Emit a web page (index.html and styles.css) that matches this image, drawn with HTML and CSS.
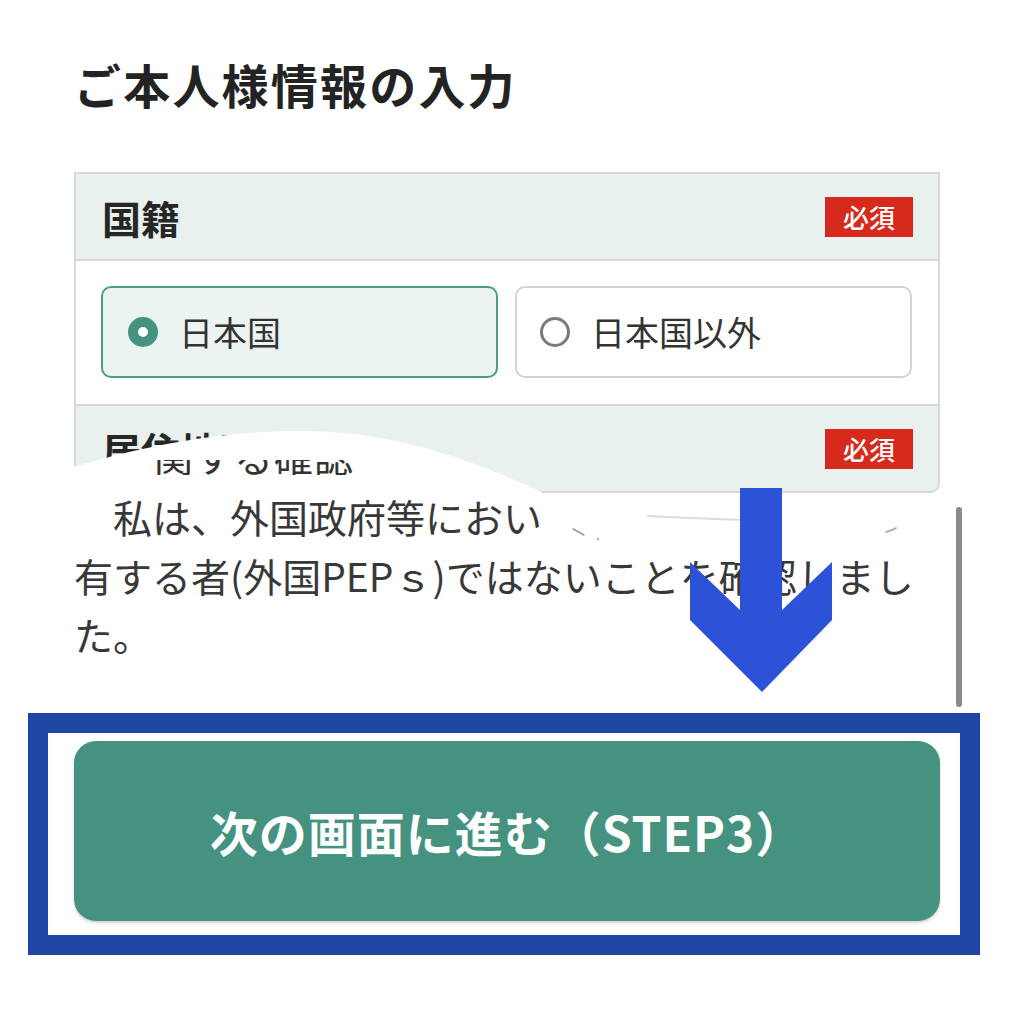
FILE: index.html
```html
<!DOCTYPE html>
<html lang="ja">
<head>
<meta charset="utf-8">
<title>ご本人様情報の入力</title>
<link rel="stylesheet" href="styles.css">
</head>
<body>
<div class="page">
  <h1 class="title">ご本人様情報の入力</h1>

  <section class="card">
    <div class="card-head">
      <span class="card-label">国籍</span>
      <span class="badge">必須</span>
    </div>
    <div class="card-body">
      <label class="opt opt-on"><span class="radio radio-on"></span><span class="opt-text">日本国</span></label>
      <label class="opt"><span class="radio"></span><span class="opt-text">日本国以外</span></label>
    </div>
    <div class="card-head">
      <span class="card-label">居住地区</span>
      <span class="badge">必須</span>
    </div>
  </section>

  <div class="confirm">
    <p class="confirm-text">　私は、外国政府等におい<br>有する者(外国PEPｓ)ではないことを確認しまし<br>た。</p>
    <span class="scrollbar"></span>
  </div>

  <div class="frame">
    <button class="next" type="button">次の画面に進む（STEP3）</button>
  </div>

  <div class="tear">
    <svg class="tear-svg" width="1009" height="1015" viewBox="0 0 1009 1015">
      <path d="M50,474 C120,452 205,431 300,431 C392,431 470,458 552,497 L552,640 L50,640 Z" fill="#ffffff"/>
      <path d="M648,516 C685,518 715,519 745,520" fill="none" stroke="#dcdcdc" stroke-width="2" stroke-linecap="round"/>
      <path d="M886,532 C890,531 893,530 896,528" fill="none" stroke="#a8a8a8" stroke-width="1.6" stroke-linecap="round"/>
      <path d="M573,529 C577,531 580,533 584,535" fill="none" stroke="#9a9a9a" stroke-width="1.6" stroke-linecap="round"/>
      <circle cx="598" cy="539" r="1.2" fill="#b5b5b5"/>
    </svg>
    <div class="tear-head"><span class="tear-head-text">関する確認</span></div>
  </div>

  <svg class="arrow" width="142" height="204" viewBox="0 0 142 204">
    <polygon points="50,0 92,0 92,122 142,74 142,132 72,204 0,132 0,74 50,122" fill="#2c53d7"/>
  </svg>
</div>
</body>
</html>
```

FILE: styles.css
```css
html, body {
  margin: 0;
  padding: 0;
  background: #ffffff;
}

body {
  font-family: "Noto Sans CJK JP", "Noto Sans", sans-serif;
  color: #2b2b2b;
}

.page {
  position: relative;
  width: 1009px;
  height: 1015px;
  overflow: hidden;
}

.title {
  margin: 56px 0 0 74px;
  font-size: 47px;
  line-height: 56px;
  font-weight: 700;
  color: #232323;
  letter-spacing: 2.2px;
}

.card {
  margin: 60px 0 0 74px;
  width: 866px;
  box-sizing: border-box;
  border: 2px solid #d5d8d6;
  border-radius: 0 0 10px 10px;
  overflow: hidden;
}

.card-head {
  height: 85px;
  background: #e8f1ee;
  display: flex;
  align-items: center;
  justify-content: space-between;
  padding: 0 25px 0 26px;
}

.card-label {
  font-size: 39px;
  line-height: 48px;
  font-weight: 700;
  color: #262626;
}

.badge {
  width: 88px;
  height: 40px;
  background: #d72a1d;
  color: #ffffff;
  font-size: 26px;
  line-height: 40px;
  text-align: center;
  font-weight: 500;
}

.card-body {
  border-top: 2px solid #d5d8d6;
  border-bottom: 2px solid #d5d8d6;
  background: #ffffff;
  padding: 25px 26px 26px 25px;
  display: grid;
  grid-template-columns: 1fr 1fr;
  column-gap: 17px;
}

.opt {
  height: 92px;
  box-sizing: border-box;
  border: 2px solid #d3d3d3;
  border-radius: 10px;
  background: #ffffff;
  display: flex;
  align-items: center;
  padding-left: 23px;
  gap: 21px;
}

.opt-on {
  border-color: #4d9c89;
  background: #ecf4f1;
  padding-left: 25px;
}

.radio {
  width: 30px;
  height: 30px;
  box-sizing: border-box;
  border-radius: 50%;
  border: 3px solid #7a7a7a;
  background: #ffffff;
  flex: none;
}

.radio-on {
  border: 10px solid #44927f;
}

.opt-text {
  font-size: 34px;
  line-height: 40px;
  color: #333333;
}

.confirm {
  position: relative;
  z-index: 2;
  margin-top: -6px;
  padding-left: 74px;
}

.confirm-text {
  margin: 0;
  font-size: 39px;
  line-height: 59px;
  color: #383838;
  white-space: nowrap;
}

.scrollbar {
  position: absolute;
  left: 956px;
  top: 20px;
  width: 6px;
  height: 200px;
  border-radius: 3px;
  background: #8b8b8b;
}

.frame {
  margin: 49px 0 0 28px;
  width: 952px;
  box-sizing: border-box;
  border: 20px solid #1e47a3;
  background: #ffffff;
  padding: 8px 20px 14px 26px;
}

.next {
  display: block;
  width: 866px;
  height: 180px;
  border: 0;
  border-radius: 22px;
  background: #44927f;
  box-shadow: 0 2px 3px rgba(0, 0, 0, 0.18);
  color: #ffffff;
  font-family: "Noto Sans CJK JP", "Noto Sans", sans-serif;
  font-size: 48px;
  font-weight: 700;
  letter-spacing: 1px;
  padding: 0;
  margin: 0;
}

.tear {
  position: absolute;
  left: 0;
  top: 0;
  width: 1009px;
  height: 1015px;
  z-index: 1;
  pointer-events: none;
}

.tear-svg {
  position: absolute;
  left: 0;
  top: 0;
}

.tear-head {
  position: absolute;
  left: 154px;
  top: 460px;
  height: 15px;
  overflow: hidden;
}

.tear-head-text {
  display: block;
  margin-top: -24px;
  font-size: 39px;
  line-height: 39px;
  letter-spacing: 1px;
  color: #333333;
  white-space: nowrap;
}

.arrow {
  position: absolute;
  left: 690px;
  top: 488px;
  z-index: 3;
}
```
